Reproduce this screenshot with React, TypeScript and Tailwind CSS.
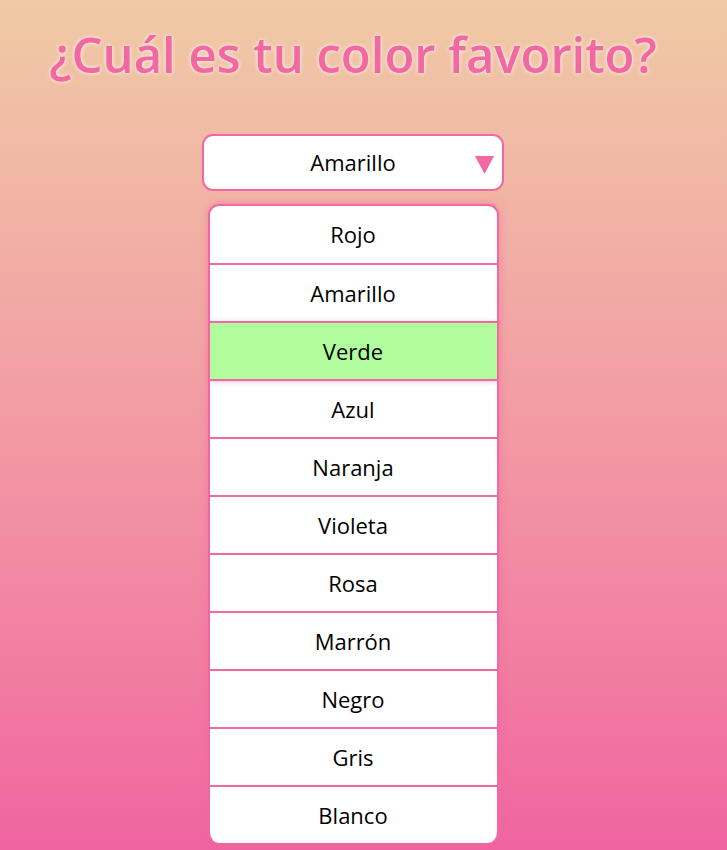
import { useState } from 'react';

const colors = [
  'Rojo',
  'Amarillo',
  'Verde',
  'Azul',
  'Naranja',
  'Violeta',
  'Rosa',
  'Marrón',
  'Negro',
  'Gris',
  'Blanco',
];

export default function App() {
  const [selected] = useState('Amarillo');
  const [hovered] = useState('Verde');

  return (
    <div className="min-h-screen w-full bg-gradient-to-b from-[#efcaa5] to-[#f064a0] font-['Open_Sans',sans-serif]">
      <div className="w-[706px] flex flex-col items-center pt-[25px]">
        <h1 className="text-[49px] leading-[58px] font-semibold text-[#f168a2] [text-shadow:0_0_4px_#fff]">
          ¿Cuál es tu color favorito?
        </h1>

        <button className="relative mt-[51px] w-[302px] h-[57px] rounded-[11px] border-2 border-[#f168a2] bg-white flex items-center justify-center text-[22px] text-black">
          {selected}
          <svg
            className="absolute right-[8px] top-[20px]"
            width="19"
            height="18"
            viewBox="0 0 19 18"
          >
            <polygon points="0,0 19,0 9.5,18" fill="#f168a2" />
          </svg>
        </button>

        <ul className="mt-[13px] w-[291px] rounded-[11px] border-2 border-b-0 border-[#f168a2] bg-white overflow-hidden shadow-[0_0_8px_rgba(241,104,162,0.6)]">
          {colors.map((color, index) => (
            <li
              key={`color-${index}`}
              className={`flex items-center justify-center text-[22px] text-black ${
                index > 0 ? 'h-[58px] border-t-2 border-[#f168a2]' : 'h-[57px]'
              } ${color === hovered ? 'bg-[#b1fc9d] shadow-[0_2px_6px_rgba(241,104,162,0.5)]' : ''}`}
            >
              {color}
            </li>
          ))}
        </ul>
      </div>
    </div>
  );
}
